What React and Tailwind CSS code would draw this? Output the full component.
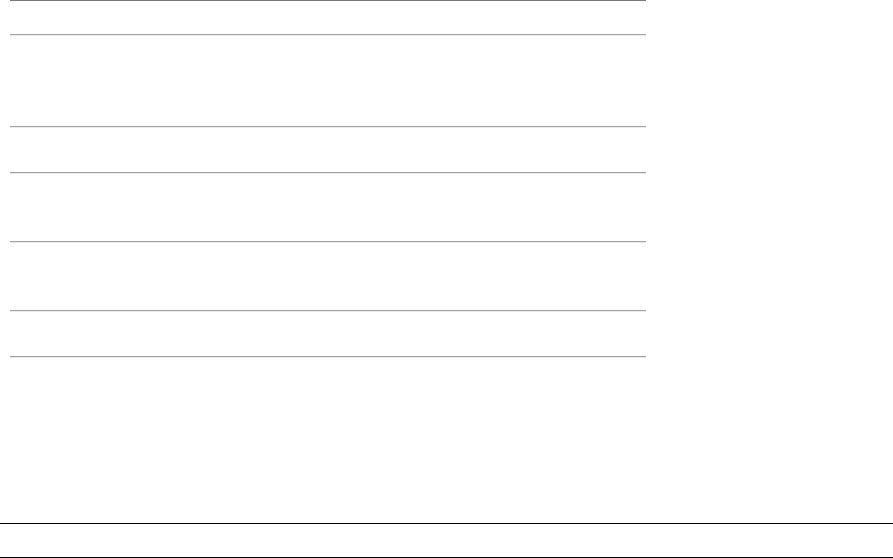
export default function App() {
  const rows = [92, 46, 69, 69, 46];

  return (
    <div className="w-[893px] h-[558px] bg-white flex flex-col overflow-hidden">
      {/* TABLE AREA */}
      <div className="ml-[10px] w-[636px] flex flex-col">
        <div className="h-[34px] border-t border-[#777777]" />
        {rows.map((h, i) => (
          <div key={i} className="border-t border-[#a0a0a0]">
            <div className="border-t border-[#ececec]" style={{ height: h - 1 }} />
          </div>
        ))}
        <div className="border-t border-[#a0a0a0]">
          <div className="border-t border-[#ececec]" />
        </div>
      </div>

      {/* FOOTER */}
      <div className="mt-[165px] h-[35px] border-t border-b border-black" />
    </div>
  );
}
